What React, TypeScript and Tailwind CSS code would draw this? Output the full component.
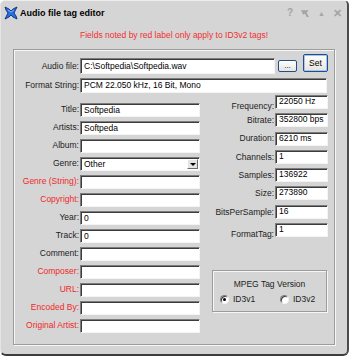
import React from "react";

const font = { fontFamily: '"Liberation Sans", Arial, sans-serif' };

function Box({ w, h, text, className = "" }: { w: number; h: number; text?: string; className?: string }) {
  return (
    <div
      className={"bg-white border border-t-[#7c7c7c] border-l-[#7c7c7c] border-b-[#f4f4f4] border-r-[#f4f4f4] shadow-[inset_1px_1px_0_#3c3c3c] flex items-center pl-[3px] text-[8.5px] leading-none text-black overflow-hidden whitespace-nowrap " + className}
      style={{ width: w, height: h }}
    >
      {text}
    </div>
  );
}

function LeftRow({ label, value, red, select }: { label: string; value?: string; red?: boolean; select?: boolean }) {
  return (
    <div className="flex items-center h-[14px]">
      <div className={"w-[65px] text-right text-[8.5px] leading-none whitespace-nowrap -mt-[1px] " + (red ? "text-[#f02828]" : "text-[#1c1c1c]")}>
        {label}
      </div>
      <div className="ml-[1px] relative">
        <Box w={120} h={14} text={value} />
        {select && (
          <div className="absolute right-[2px] top-[2px] w-[11px] h-[10px] bg-[#e4e4e4] border border-t-white border-l-white border-b-[#6c6c6c] border-r-[#6c6c6c] flex items-center justify-center">
            <div className="w-0 h-0 border-l-[3px] border-r-[3px] border-t-[3px] border-l-transparent border-r-transparent border-t-black" />
          </div>
        )}
      </div>
    </div>
  );
}

function RightRow({ label, value, drop = 0 }: { label: string; value: string; drop?: number }) {
  return (
    <div className="flex items-center h-[14px]">
      <div className="w-[74px] text-right text-[8.5px] leading-none text-[#1c1c1c] whitespace-nowrap" style={{ marginTop: drop }}>
        {label}
      </div>
      <div className="ml-[1px]">
        <Box w={53} h={14} text={value} className="items-start pt-[1px]" />
      </div>
    </div>
  );
}

function Radio({ checked, label }: { checked?: boolean; label: string }) {
  return (
    <div className="flex items-center gap-[4px]">
      <div className="w-[9px] h-[9px] rounded-full bg-white border border-t-[#7c7c7c] border-l-[#7c7c7c] border-b-[#f4f4f4] border-r-[#f4f4f4] shadow-[inset_1px_1px_0_#3c3c3c] flex items-center justify-center">
        {checked && <div className="w-[3px] h-[3px] rounded-full bg-black" />}
      </div>
      <span className="text-[8.5px] leading-none text-[#1c1c1c]">{label}</span>
    </div>
  );
}

function Logo() {
  return (
    <svg width="14" height="14" viewBox="0 0 14 14">
      <path
        d="M1 1 L5 3 L7 5 L9 3 L13 1 L11 5 L10 7 L12 10 L13 13 L9 11 L7 9 L5 11 L1 13 L3 9 L4 7 L2 4 Z"
        fill="#2a6fe0"
        stroke="#0c2d7a"
        strokeWidth="0.9"
        strokeLinejoin="round"
      />
      <path d="M4 4 L7 6 L10 4" fill="none" stroke="#9cc4ff" strokeWidth="0.8" />
    </svg>
  );
}

export default function App() {
  return (
    <div className="w-[350px] h-[358px] bg-white" style={font}>
      <div className="w-[349px] h-[356px] bg-[#d5d5d5] rounded-t-[5px] rounded-b-[6px] border border-t-[#eeeeee] border-l-[#e4e4e4] border-r-2 border-b-2 border-r-[#4c4c4c] border-b-[#3c3c3c] flex flex-col">
        {/* title bar */}
        <div className="h-[24px] flex items-center pl-[3px] pr-[5px]">
          <Logo />
          <span className="ml-[2px] text-[9px] font-bold text-black leading-none">Audio file tag editor</span>
          <div className="ml-auto flex items-center gap-[8px] text-[#a4a4a4] text-[10px] font-bold leading-none">
            <span>?</span>
            <svg width="9" height="9" viewBox="0 0 8 8">
              <path d="M0 1 L7 1 L5 3 L7 7 L5 7 L3.5 4 L2 5 Z" fill="#a4a4a4" />
            </svg>
            <span className="text-[7px]">▲</span>
            <span className="text-[11px]">✕</span>
          </div>
        </div>

        {/* notice */}
        <div className="h-[24px] flex justify-center pt-[6px] text-[8.5px] leading-none text-[#f03030]">
          Fields noted by red label only apply to ID3v2 tags!
        </div>

        {/* group box */}
        <div className="ml-[12px] w-[322px] h-[296px] border border-[#9c9c9c] shadow-[inset_1px_1px_0_#f6f6f6,1px_1px_0_#f6f6f6]">
          {/* audio file row */}
          <div className="flex items-start mt-[4px]">
            <div className="mt-[4px] h-[16px] w-[65px] flex items-center justify-end text-[8.5px] leading-none text-[#1c1c1c]">
              Audio file:
            </div>
            <div className="ml-[1px] mt-[4px]">
              <Box w={195} h={16} text="C:\Softpedia\Softpedia.wav" />
            </div>
            <div className="ml-[3px] mt-[6px] w-[19px] h-[12px] rounded-[2px] border border-[#1c4f8c] bg-gradient-to-b from-white to-[#e6e4dc] flex items-center justify-center text-[8px] leading-none text-black">
              ...
            </div>
            <div className="ml-[6px] w-[25px] h-[18px] rounded-[2px] border border-[#1c4f8c] shadow-[inset_0_0_0_1px_#a8c4ec] bg-gradient-to-b from-white to-[#e6e4dc] flex items-center justify-center text-[8.5px] leading-none text-black">
              Set
            </div>
          </div>

          {/* format string */}
          <div className="flex items-center mt-[4px]">
            <div className="w-[65px] text-right text-[8.5px] leading-none text-[#1c1c1c] whitespace-nowrap">Format String:</div>
            <div className="ml-[1px]">
              <Box w={247} h={15} text="PCM 22.050 kHz, 16 Bit, Mono" />
            </div>
          </div>

          <div className="flex items-start">
            {/* left column */}
            <div className="mt-[10px] flex flex-col gap-[4px]">
              <LeftRow label="Title:" value="Softpedia" />
              <LeftRow label="Artists:" value="Softpeda" />
              <LeftRow label="Album:" />
              <LeftRow label="Genre:" value="Other" select />
              <LeftRow label="Genre (String):" red />
              <LeftRow label="Copyright:" red />
              <LeftRow label="Year:" value="0" />
              <LeftRow label="Track:" value="0" />
              <LeftRow label="Comment:" />
              <LeftRow label="Composer:" red />
              <LeftRow label="URL:" red />
              <LeftRow label="Encoded By:" red />
              <LeftRow label="Original Artist:" red />
            </div>

            {/* right column */}
            <div className="mt-[2px] flex flex-col">
              <div className="flex flex-col gap-[4.3px]">
                <RightRow label="Frequency:" value="22050 Hz" drop={8} />
                <RightRow label="Bitrate:" value="352800 bps" />
                <RightRow label="Duration:" value="6210 ms" />
                <RightRow label="Channels:" value="1" />
                <RightRow label="Samples:" value="136922" />
                <RightRow label="Size:" value="273890" />
                <RightRow label="BitsPerSample:" value="16" />
                <RightRow label="FormatTag:" value="1" drop={8} />
              </div>

              <div className="ml-[12px] mt-[33px] w-[115px] h-[42px] border border-[#9c9c9c] shadow-[inset_1px_1px_0_#f6f6f6,1px_1px_0_#f6f6f6] flex flex-col">
                <div className="mt-[9px] text-center text-[8.5px] leading-none text-[#1c1c1c]">MPEG Tag Version</div>
                <div className="mt-[6px] flex pl-[7px]">
                  <div className="w-[60px]">
                    <Radio checked label="ID3v1" />
                  </div>
                  <Radio label="ID3v2" />
                </div>
              </div>
            </div>
          </div>
        </div>
      </div>
    </div>
  );
}
